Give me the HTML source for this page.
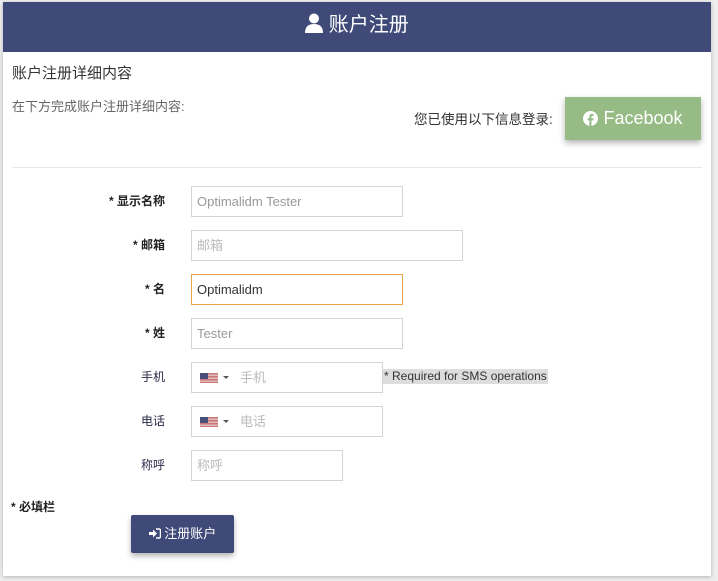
<!DOCTYPE html>
<html><head><meta charset="utf-8"><style>
*{box-sizing:border-box;margin:0;padding:0}
body{width:718px;height:581px;background:#eeeeee;font-family:"Liberation Sans","Noto Sans CJK SC",sans-serif;position:relative;overflow:hidden}
.card{position:absolute;left:3px;top:2px;width:708px;height:574px;background:#fff;box-shadow:0 1px 4px rgba(0,0,0,.25)}
.hdr{position:absolute;left:3px;top:2px;width:708px;height:50px;background:#3f4a78;color:#fff;font-size:20px;text-align:center;line-height:46px}
.a{position:absolute}
.lbl{position:absolute;right:553px;font-size:12px;color:#2a2a4a;text-align:right}
.lbl.b{font-weight:bold;color:#222}
.in{position:absolute;left:191px;height:31px;border:1px solid #d4d4d4;background:#fff;font-size:13px;color:#999;padding-left:5px;line-height:29px}
.flag{position:absolute;left:8px;top:10px;width:18px;height:10px;background:repeating-linear-gradient(#c77 0 1.5px,#dbb 1.5px 3px)}
.flag:before{content:"";position:absolute;left:0;top:0;width:8px;height:6px;background:#4a4f7a}
.car{position:absolute;left:31px;top:13px;border:3px solid transparent;border-top:3px solid #555}
</style></head><body>
<div class="card"></div>
<div class="hdr"><svg width="18" height="20" viewBox="0 0 18 20" style="vertical-align:-2px"><circle cx="9" cy="5.5" r="5" fill="#fff"/><path d="M0 20 Q0 11 9 11 Q18 11 18 20Z" fill="#fff"/></svg> 账户注册</div>
<div class="a" style="left:12px;top:62px;font-size:15px;color:#333">账户注册详细内容</div>
<div class="a" style="left:12px;top:96px;font-size:13px;color:#666">在下方完成账户注册详细内容:</div>
<div class="a" style="left:414px;top:108px;font-size:13.5px;color:#333">您已使用以下信息登录:</div>
<div class="a" style="left:565px;top:97px;width:136px;height:43px;background:#96bb84;color:#fff;font-size:18px;line-height:42px;text-align:center;box-shadow:0 3px 6px rgba(0,0,0,.3)"><svg width="15" height="15" viewBox="0 0 16 16" style="vertical-align:-2px"><circle cx="8" cy="8" r="8" fill="#fff"/><path d="M9 16V10h2l.3-2.3H9V6.3c0-.7.2-1.1 1.1-1.1h1.2V3.1C11 3 10.3 3 9.6 3 8 3 6.8 4 6.8 5.8v1.9H5V10h1.8v6z" fill="#96bb84"/></svg> Facebook</div>
<div class="a" style="left:12px;top:167px;width:690px;height:1px;background:#e8e8e8"></div>

<div class="lbl b" style="top:192px">* 显示名称</div>
<div class="in" style="top:186px;width:212px">Optimalidm Tester</div>
<div class="lbl b" style="top:236px">* 邮箱</div>
<div class="in" style="top:230px;width:272px;color:#bbb">邮箱</div>
<div class="lbl b" style="top:280px">* 名</div>
<div class="in" style="top:274px;width:212px;border-color:#e8a24a;color:#333">Optimalidm</div>
<div class="lbl b" style="top:324px">* 姓</div>
<div class="in" style="top:318px;width:212px">Tester</div>
<div class="lbl" style="top:368px">手机</div>
<div class="in" style="top:362px;width:192px;padding-left:48px;color:#bbb"><span class="flag"></span><span class="car"></span>手机</div>
<div class="a" style="left:383px;top:369px;height:15px;background:#ddd;font-size:12px;color:#333;padding:0 1px;line-height:15px">* Required for SMS operations</div>
<div class="lbl" style="top:412px">电话</div>
<div class="in" style="top:406px;width:192px;padding-left:48px;color:#bbb"><span class="flag"></span><span class="car"></span>电话</div>
<div class="lbl" style="top:456px">称呼</div>
<div class="in" style="top:450px;width:152px;color:#bbb">称呼</div>
<div class="a" style="left:11px;top:498px;font-size:12px;font-weight:bold;color:#222">* 必填栏</div>
<div class="a" style="left:131px;top:515px;width:103px;height:38px;background:#3f4a78;color:#fff;font-size:13px;text-align:center;line-height:38px;border-radius:2px;box-shadow:0 3px 6px rgba(0,0,0,.3)"><svg width="12" height="11" viewBox="0 0 12 11" style="vertical-align:-1px"><path d="M0 4h4V1.5L8 5.5 4 9.5V7H0z" fill="#fff"/><path d="M7 1h3a1.5 1.5 0 0 1 1.5 1.5v6A1.5 1.5 0 0 1 10 10H7" stroke="#fff" stroke-width="1.5" fill="none"/></svg> 注册账户</div>
</body></html>
